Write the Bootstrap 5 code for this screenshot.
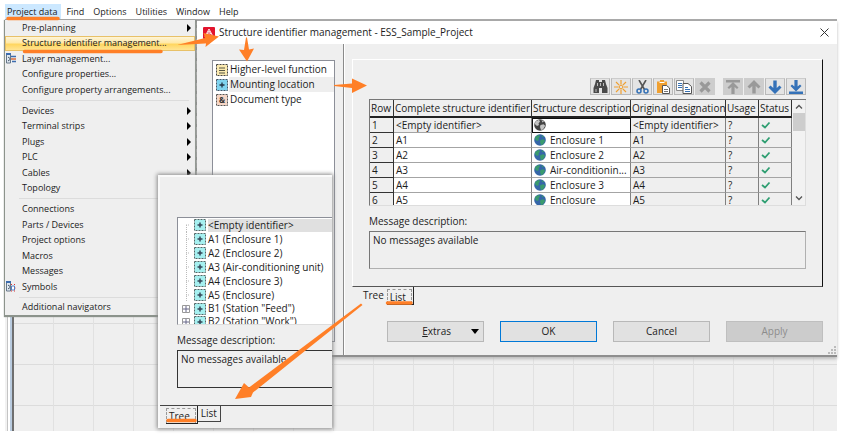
<!DOCTYPE html>
<html lang="en">
<head>
<meta charset="utf-8">
<meta name="viewport" content="width=device-width, initial-scale=1">
<title>Structure identifier management</title>
<link href="https://cdn.jsdelivr.net/npm/bootstrap@5.3.0/dist/css/bootstrap.min.css" rel="stylesheet">
<style>
  :root { --face: #efefef; --ink: #1c1c1c; --accent: #ff7f27; }
  body { font-family: "Open Sans", "Noto Sans", sans-serif; font-size: 10px; line-height: 15px; color: var(--ink); background: #fff; min-height: 435px; }
  button, textarea { font: inherit; color: inherit; border: 0; background: none; padding: 0; border-radius: 0; }
  svg { display: block; flex: none; }

  .menu-strip { height: 19px; padding: 4px 0 0 5px; font-size: 9px; line-height: 14px; background: #fff; }
  .menu-strip button { padding: 0 4px 0 5px; }
  .menu-strip button.is-open { background: #cce8ff; padding: 0 4px 0 2px; }

  .desk { height: 412px; margin: 0 4px 0 5px; border-top: 1px solid #a8a8a8; }
  .rail { width: 9px; background: linear-gradient(90deg, #f2f2f2 0 2px, #c4c4c4 2px 3px, #fff 3px 5px, #b9cbdf 5px 7px, #6f6f6f 7px); }
  .sheet { background: linear-gradient(90deg, transparent 39px, #e1e1e1 39px) 0 0 / 40px 41px, linear-gradient(transparent 40px, #dcdcdc 40px) 0 17px / 40px 41px, var(--face); }

  .drop { position: absolute; left: 5px; top: 20px; width: 190px; height: 295px; background: var(--face); font-size: 9px; line-height: 14px; box-shadow: 0 1px 1px 1px #8c938c; }
  .drop button { flex: 1; padding: 0 4px 0 1px; text-align: left; }
  .drop .slot { width: 16px; flex: none; }
  .drop .is-hot { background: linear-gradient(#fdf6e0, #ffe9a8 45%, #ffd65f 55%, #ffe79c); outline: 1px solid #e8c168; outline-offset: -1px; }
  .drop hr { margin: 2px 6px 2px 14px; border: 0; border-top: 1px solid #dcdcdc; opacity: 1; }
  .edge { position: absolute; left: 194px; top: 20px; width: 3px; height: 296px; background: repeating-linear-gradient(#8a8a8a 0 5px, #6e6e6e 5px 8px, #9a9a9a 8px 11px); }

  .win { position: absolute; left: 197px; right: 4px; top: 20px; height: 337px; background: var(--face); border-top: 1px solid #a8a8a8; border-bottom: 2px solid #8e8e8e; box-shadow: 0 2px 3px #bbb; }
  .win-bar { height: 23px; padding: 0 4px 0 6px; background: #fff; }
  .side { flex: 0 0 147px; padding: 16px 8px 13px 15px; border-right: 1px solid #8a8a8a; box-shadow: 1px 0 #fff; }
  .kinds { border: 1px solid #8c8f98; background: #fff; padding: 1px 0; }
  .kinds button { text-align: left; padding-left: 3px; height: 15px; white-space: nowrap; }
  .kinds span { padding-left: 2px; }
  .kinds .is-picked { background: linear-gradient(90deg, #fff 16px, #eee 16px); }
  .work { padding: 15px 14px 0 8px; min-width: 0; }
  .pane { padding: 18px 16px 17px 16px; border: 1px solid; border-color: #fff #111 #555 #fff; }
  .tools { gap: 1px; }
  .tool { width: 20px; height: 17px; border: 1px solid #b9b9b9; border-top-color: #ccc; background: #e4e4e4; display: flex; align-items: center; justify-content: center; }
  .tool:disabled { background: #cdcdcd; border-color: #cdcdcd; }

  .gridbox { height: 107px; border-top: 1px solid #777; border-left: 1px solid #777; border-bottom: 1px solid #ddd; background: var(--face); overflow: hidden; }
  .sheet-table { table-layout: fixed; width: 100%; border-collapse: separate; border-spacing: 0; color: var(--ink); }
  .sheet-table th, .sheet-table td { padding: 0 2px; height: 15px; line-height: 14px; border-right: 1px solid #808080; border-bottom: 1px solid #a4a4a4; white-space: nowrap; font-weight: 400; }
  .sheet-table thead th { height: 18px; line-height: 16px; padding: 0 0 0 1px; border-right: 1px solid #333; border-bottom: 2px solid #222; }
  .sheet-table tbody th { border-right: 1px solid #333; border-bottom: 1px solid #333; }
  .sheet-table td.open { background: #fff; }
  .sheet-table td.cursor { background: #fff; outline: 1px solid #111; outline-offset: -1px; }
  .scroller { width: 14px; padding-left: 1px; border-right: 1px solid #ddd; background: #f2f2f2; }
  .thumb { height: 18px; background: #cdcdcd; }
  .note-label { padding-bottom: 2px; }
  .note { display: block; width: 100%; height: 38px; resize: none; padding: 1px 3px; line-height: 14px; border: 1px solid; border-color: #777 #b0b0b0 #b0b0b0 #777; overflow: hidden; outline: 0; }
  .page-tab { height: 16px; padding: 0 3px; background: var(--face); }
  .page-tab.is-front { height: 18px; padding: 1px 1px 0 0; border-right: 1px solid #222; border-bottom: 1px solid #222; }
  .page-tab.is-back { border-right: 1px solid #444; border-bottom: 1px solid #444; }
  .dotted-box { display: block; border: 1px dashed #999; border-bottom: 0; padding: 0 5px 0 2px; height: 15px; line-height: 15px; }
  .act { flex: 0 0 97px; height: 21px; border: 1px solid #b8b8b8; background: #e1e1e1; }
  .act.is-default { border: 1px solid #0078d7; outline: 1px solid #0078d7; outline-offset: -1px; }
  .act:disabled { background: #ccc; border-color: #bfbfbf; color: #8c8c8c; }

  .snip { position: absolute; left: 158px; top: 175px; width: 174px; height: 253px; background: var(--face); border: 1px solid #fafafa; border-width: 2px 0 0 2px; box-shadow: 0 0 4px 1px #8a8a8a; padding-top: 40px; }
  .snip-in { margin-left: 17px; }
  .tree { height: 108px; border: 1px solid #8c8f98; border-right: 0; border-bottom-color: #ddd; background: #fff; overflow: hidden; }
  .tree ul { height: 110px; }
  .tree li { flex: 1; line-height: 13px; white-space: nowrap; }
  .tree li > span { padding-left: 2px; }
  .tree .is-picked > span { background: linear-gradient(90deg, #fff 2px, #e0e0e0 2px); flex: 1; }
  .snip .note { height: 38px; border-right: 0; border-color: #333; }
  .snip-foot { margin-top: 17px; border-top: 1px solid #444; padding-left: 6px; }
  .marks { position: absolute; left: 0; top: 0; pointer-events: none; }
</style>
</head>
<body class="position-relative">
<svg width="0" height="0" class="position-absolute" aria-hidden="true">
  <defs>
    <symbol id="loc" viewBox="0 0 12 12"><rect x=".5" y=".5" width="11" height="11" fill="#a5f0f0" stroke="#566" stroke-dasharray="2 1"/><path d="M6 3.500v5M3.500 6h5" stroke="#345" stroke-width="1.500"/></symbol>
    <symbol id="globe" viewBox="0 0 12 12"><circle cx="6" cy="6" r="5.800" fill="#3566a8"/><path d="M1.500 2.500 5 .8l1 1.700-1.500 2L5 6 3 7 .8 5zM6.500 6l3-.8 1.700 1.500L9 10.500 7 11 6 8zM7.500 1l2.500 1.500-1.500 1z" fill="#3a9a6e"/></symbol>
    <symbol id="globe-off" viewBox="0 0 12 12"><circle cx="6" cy="6" r="5.800" fill="#444"/><path d="M1.500 2.500 5 .8l1 1.700-1.500 2L5 6 3 7 .8 5zM6.500 6l3-.8 1.700 1.500L9 10.500 7 11 6 8zM7.500 1l2.500 1.500-1.500 1z" fill="#c4c4c4"/></symbol>
    <symbol id="tick" viewBox="0 0 10 8"><path d="M1 4l3 2.500L8.500 1.500" fill="none" stroke="#2f9f72" stroke-width="1.800"/></symbol>
    <symbol id="fly" viewBox="0 0 4 8"><path d="M0 0l4 4-4 4z"/></symbol>
    <symbol id="plusbox" viewBox="0 0 8 8"><path d="M.5.5h7v7h-7z" fill="#fff" stroke="#999"/><path d="M4 1v6M1 4h6" stroke="#668"/></symbol>
    <symbol id="up" viewBox="0 0 14 14"><path d="M7 0 13.500 6.500 11.500 8.500 8.700 6v7.500H5.300V6L2.500 8.500.5 6.500z"/></symbol>
  </defs>
</svg>

<nav class="menu-strip d-flex" aria-label="Main menu">
  <button type="button" class="is-open">Project data</button>
  <button type="button">Find</button>
  <button type="button">Options</button>
  <button type="button">Utilities</button>
  <button type="button">Window</button>
  <button type="button">Help</button>
</nav>

<main>
  <div class="desk d-flex"><div class="rail"></div><div class="sheet flex-fill"></div></div>

  <div class="edge"></div>
  <div class="drop d-flex flex-column" role="menu" aria-label="Project data">
    <button class="d-flex align-items-center" role="menuitem"><span class="slot"></span>Pre-planning<svg class="ms-auto" width="4" height="8"><use href="#fly"/></svg></button>
    <button class="d-flex align-items-center is-hot" role="menuitem"><span class="slot"></span>Structure identifier management...</button>
    <button class="d-flex align-items-center" role="menuitem"><span class="slot"><svg width="10" height="11" viewBox="0 0 10 11"><path d="M.5 1h4v9h-4z" fill="#dfe8f2" stroke="#678"/><path d="M0 0h5v2H0z" fill="#3d6cae"/><path d="M2 4l2 1.500M2 8l2-1.500" stroke="#456"/><path d="M5 3.500h5M6 8.500h4" stroke="#3d6cae" stroke-width="1.500"/><path d="M5 6h5" stroke="#d96b3c" stroke-width="1.500"/></svg></span>Layer management...</button>
    <button class="d-flex align-items-center" role="menuitem"><span class="slot"></span>Configure properties...</button>
    <button class="d-flex align-items-center" role="menuitem"><span class="slot"></span>Configure property arrangements...</button>
    <hr>
    <button class="d-flex align-items-center" role="menuitem"><span class="slot"></span>Devices<svg class="ms-auto" width="4" height="8"><use href="#fly"/></svg></button>
    <button class="d-flex align-items-center" role="menuitem"><span class="slot"></span>Terminal strips<svg class="ms-auto" width="4" height="8"><use href="#fly"/></svg></button>
    <button class="d-flex align-items-center" role="menuitem"><span class="slot"></span>Plugs<svg class="ms-auto" width="4" height="8"><use href="#fly"/></svg></button>
    <button class="d-flex align-items-center" role="menuitem"><span class="slot"></span>PLC<svg class="ms-auto" width="4" height="8"><use href="#fly"/></svg></button>
    <button class="d-flex align-items-center" role="menuitem"><span class="slot"></span>Cables<svg class="ms-auto" width="4" height="8"><use href="#fly"/></svg></button>
    <button class="d-flex align-items-center" role="menuitem"><span class="slot"></span>Topology</button>
    <hr>
    <button class="d-flex align-items-center" role="menuitem"><span class="slot"></span>Connections</button>
    <button class="d-flex align-items-center" role="menuitem"><span class="slot"></span>Parts / Devices</button>
    <button class="d-flex align-items-center" role="menuitem"><span class="slot"></span>Project options</button>
    <button class="d-flex align-items-center" role="menuitem"><span class="slot"></span>Macros</button>
    <button class="d-flex align-items-center" role="menuitem"><span class="slot"></span>Messages</button>
    <button class="d-flex align-items-center" role="menuitem"><span class="slot"><svg width="10" height="11" viewBox="0 0 10 11"><path d="M.5 1h4v9h-4z" fill="#dfe8f2" stroke="#678"/><path d="M0 0h5v2H0z" fill="#3d6cae"/><path d="M2 4l2 1.500M2 8l2-1.500" stroke="#456"/><path d="M5.500 5h3v4h-3z" fill="#fff" stroke="#567fc0"/><path d="M5 3.500h1M8 3.500h1M5 10h1M8 10h1M9.500 7h.5" stroke="#d33"/></svg></span>Symbols</button>
    <hr>
    <button class="d-flex align-items-center" role="menuitem"><span class="slot"></span>Additional navigators</button>
  </div>

  <section class="win d-flex flex-column" role="dialog" aria-label="Structure identifier management">
    <header class="win-bar d-flex align-items-center">
      <svg width="12" height="12" viewBox="0 0 12 12"><rect width="12" height="12" rx="1" fill="#e2142d"/><path d="M2 9.500 6 2l4 7.500M4 7.500 6 4l2 3.500M6 6v4" fill="none" stroke="#fff" stroke-width=".9"/></svg>
      <span class="ms-1">Structure identifier management - ESS_Sample_Project</span>
      <button type="button" class="ms-auto pe-1" aria-label="Close"><svg width="9" height="9" viewBox="0 0 9 9"><path d="M.5.5l8 8M8.500.5l-8 8" stroke="#333"/></svg></button>
    </header>
    <div class="d-flex flex-fill">
      <aside class="side d-flex flex-column">
        <div class="kinds d-flex flex-column flex-fill">
          <button class="d-flex align-items-center" type="button"><svg width="12" height="12" viewBox="0 0 12 12"><rect x=".5" y=".5" width="11" height="11" fill="#fbeab0" stroke="#444" stroke-dasharray="2 1"/><path d="M3 4h6M3 6.500h6M3 9h6" stroke="#554"/></svg><span>Higher-level function</span></button>
          <button class="d-flex align-items-center is-picked" type="button"><svg width="12" height="12" viewBox="0 0 12 12"><rect x=".5" y=".5" width="11" height="11" fill="#7fd4f0" stroke="#456" stroke-dasharray="2 1"/><path d="M6 3.500v5M3.500 6h5" stroke="#234" stroke-width="1.300"/></svg><span>Mounting location</span></button>
          <button class="d-flex align-items-center" type="button"><svg width="12" height="12" viewBox="0 0 12 12"><rect x=".5" y=".5" width="11" height="11" fill="#f6d6c6" stroke="#555" stroke-dasharray="2 1"/><text x="6" y="9" font-size="8" font-weight="700" text-anchor="middle" fill="#333">&amp;</text></svg><span>Document type</span></button>
        </div>
      </aside>
      <div class="work flex-fill">
        <div class="pane d-flex flex-column">
          <div class="d-flex justify-content-end mb-1" role="toolbar" aria-label="Identifiers">
            <div class="tools d-flex">
              <button class="tool" aria-label="Find"><svg width="15" height="13" viewBox="0 0 15 13"><path d="M3 0h3v2h3V0h3l1 4 1.500 4v5H9V8H6v5H.5V8L2 4z" fill="#4a4a4a"/><path d="M4.500 3v3M10.500 3v3M3 9v3M7.500 3v3" stroke="#bbb"/></svg></button>
              <button class="tool" aria-label="New"><svg width="14" height="14" viewBox="0 0 14 14"><path d="M7 0v4.500M7 9.500V14M0 7h4.500M9.500 7H14M2 2l3.200 3.200M8.800 8.800 12 12M12 2 8.800 5.200M5.200 8.800 2 12" stroke="#f0a030" stroke-width="1.200"/><circle cx="7" cy="7" r="1.800" fill="none" stroke="#f0a030"/></svg></button>
              <button class="tool" aria-label="Cut"><svg width="13" height="14" viewBox="0 0 13 14"><path d="M3 0l5.500 9.500M10 0 4.500 9.500" stroke="#555" stroke-width="1.600"/><circle cx="3" cy="11" r="2" fill="none" stroke="#3470b4" stroke-width="1.500"/><circle cx="10" cy="11" r="2" fill="none" stroke="#3470b4" stroke-width="1.500"/></svg></button>
              <button class="tool" aria-label="Paste"><svg width="13" height="14" viewBox="0 0 13 14"><path d="M0 1.500h3V0h4v1.500h3V13H0z" fill="#f0a030"/><path d="M2.500 2.500h5" stroke="#fff"/><path d="M5.500 5.500h4l3 2.500v5.500h-7z" fill="#fff" stroke="#555"/><path d="M7 9.500h4M7 11.500h4" stroke="#777"/></svg></button>
              <button class="tool" aria-label="Copy"><svg width="16" height="14" viewBox="0 0 16 14"><path d="M.5.5h7v10h-7z" fill="#fff" stroke="#888"/><path d="M2 3.500h4M2 5.500h4M2 7.500h4" stroke="#3470b4"/><path d="M7 3.500h5l3.500 3v7H7z" fill="#fff" stroke="#555"/><path d="M9 7.500h3M9 9.500h5M9 11.500h5" stroke="#3470b4"/></svg></button>
              <button class="tool" aria-label="Delete" disabled><svg width="12" height="12" viewBox="0 0 12 12"><path d="M1.500 1.500l9 9M10.500 1.500l-9 9" stroke="#999" stroke-width="3.200"/></svg></button>
            </div>
            <div class="tools d-flex ms-2">
              <button class="tool" aria-label="Move to top" disabled><svg width="14" height="14" viewBox="0 0 14 14" fill="#999"><path d="M0 0h14v2.500H0z"/><path d="M7 2l5.500 5.500-1.500 1.500L8.600 7v7H5.400V7L3 9 1.500 7.500z"/></svg></button>
              <button class="tool" aria-label="Move up" disabled><svg width="14" height="14" fill="#999"><use href="#up"/></svg></button>
              <button class="tool" aria-label="Move down"><svg width="14" height="14" viewBox="0 0 14 14" fill="#3572b8"><path d="M7 14 13.500 7.500 11.500 5.500 8.700 8V.5H5.300V8L2.500 5.500.5 7.500z"/></svg></button>
              <button class="tool" aria-label="Move to bottom"><svg width="14" height="14" viewBox="0 0 14 14" fill="#3572b8"><path d="M0 11.500h14V14H0z"/><path d="M7 11.500l5.500-5.500L11 4.500 8.600 6.500V0H5.400v6.500L3 4.500 1.500 6z"/></svg></button>
            </div>
          </div>
          <div class="gridbox d-flex">
            <table class="sheet-table">
              <colgroup><col style="width:24px"><col style="width:138px"><col><col style="width:95px"><col style="width:33px"><col style="width:33px"></colgroup>
              <thead><tr><th scope="col">Row</th><th scope="col">Complete structure identifier</th><th scope="col">Structure description</th><th scope="col">Original designation</th><th scope="col">Usage</th><th scope="col">Status</th></tr></thead>
              <tbody>
                <tr><th scope="row">1</th><td>&lt;Empty identifier&gt;</td><td class="cursor"><svg width="12" height="12"><use href="#globe-off"/></svg></td><td>&lt;Empty identifier&gt;</td><td>?</td><td><svg width="10" height="8"><use href="#tick"/></svg></td></tr>
                <tr><th scope="row">2</th><td class="open">A1</td><td class="open"><div class="d-flex align-items-center"><svg width="12" height="12"><use href="#globe"/></svg><span class="ms-1">Enclosure 1</span></div></td><td>A1</td><td>?</td><td><svg width="10" height="8"><use href="#tick"/></svg></td></tr>
                <tr><th scope="row">3</th><td class="open">A2</td><td class="open"><div class="d-flex align-items-center"><svg width="12" height="12"><use href="#globe"/></svg><span class="ms-1">Enclosure 2</span></div></td><td>A2</td><td>?</td><td><svg width="10" height="8"><use href="#tick"/></svg></td></tr>
                <tr><th scope="row">4</th><td class="open">A3</td><td class="open"><div class="d-flex align-items-center"><svg width="12" height="12"><use href="#globe"/></svg><span class="ms-1">Air-conditionin...</span></div></td><td>A3</td><td>?</td><td><svg width="10" height="8"><use href="#tick"/></svg></td></tr>
                <tr><th scope="row">5</th><td class="open">A4</td><td class="open"><div class="d-flex align-items-center"><svg width="12" height="12"><use href="#globe"/></svg><span class="ms-1">Enclosure 3</span></div></td><td>A4</td><td>?</td><td><svg width="10" height="8"><use href="#tick"/></svg></td></tr>
                <tr><th scope="row">6</th><td class="open">A5</td><td class="open"><div class="d-flex align-items-center"><svg width="12" height="12"><use href="#globe"/></svg><span class="ms-1">Enclosure</span></div></td><td>A5</td><td>?</td><td><svg width="10" height="8"><use href="#tick"/></svg></td></tr>
              </tbody>
            </table>
            <div class="scroller d-flex flex-column flex-shrink-0">
              <svg width="12" height="13" viewBox="0 0 12 13"><path d="M3 8.500l3-3 3 3" fill="none" stroke="#555" stroke-width="1.300"/></svg>
              <div class="thumb"></div>
              <svg class="mt-auto" width="12" height="13" viewBox="0 0 12 13"><path d="M3 4.500l3 3 3-3" fill="none" stroke="#555" stroke-width="1.300"/></svg>
            </div>
          </div>
          <label for="list-note" class="note-label mt-2">Message description:</label>
          <textarea id="list-note" class="note" readonly>No messages available</textarea>
        </div>
        <div class="d-flex align-items-start ps-2" role="tablist">
          <button class="page-tab" role="tab">Tree</button>
          <button class="page-tab is-front" role="tab"><span class="dotted-box">List</span></button>
        </div>
        <div class="d-flex justify-content-end gap-3 mt-3">
          <button type="button" class="act d-flex align-items-center justify-content-end pe-1"><span class="me-3 pe-1"><u>E</u>xtras</span><svg width="8" height="5" viewBox="0 0 8 5"><path d="M0 0h8L4 5z"/></svg></button>
          <button type="button" class="act is-default">OK</button>
          <button type="button" class="act">Cancel</button>
          <button type="button" class="act" disabled>Apply</button>
        </div>
      </div>
    </div>
    <svg class="position-absolute end-0 bottom-0" width="9" height="9" viewBox="0 0 9 9" fill="#bbb"><path d="M6 0h2v2H6zM3 3h2v2H3zM6 3h2v2H6zM0 6h2v2H0zM3 6h2v2H3zM6 6h2v2H6z"/></svg>
  </section>

  <section class="snip" aria-label="Tree page">
    <div class="snip-in d-flex flex-column">
      <div class="tree">
        <ul class="list-unstyled d-flex flex-column m-0">
          <li class="d-flex align-items-center ps-2 is-picked"><svg width="4" height="14"><path d="M0 7h4M.5 7v7" stroke="#bbb" stroke-dasharray="1 1"/></svg><svg width="12" height="12" class="ms-1"><use href="#loc"/></svg><span>&lt;Empty identifier&gt;</span></li>
          <li class="d-flex align-items-center ps-2"><svg width="4" height="14"><path d="M0 7h4M.5 0v14" stroke="#bbb" stroke-dasharray="1 1"/></svg><svg width="12" height="12" class="ms-1"><use href="#loc"/></svg><span>A1 (Enclosure 1)</span></li>
          <li class="d-flex align-items-center ps-2"><svg width="4" height="14"><path d="M0 7h4M.5 0v14" stroke="#bbb" stroke-dasharray="1 1"/></svg><svg width="12" height="12" class="ms-1"><use href="#loc"/></svg><span>A2 (Enclosure 2)</span></li>
          <li class="d-flex align-items-center ps-2"><svg width="4" height="14"><path d="M0 7h4M.5 0v14" stroke="#bbb" stroke-dasharray="1 1"/></svg><svg width="12" height="12" class="ms-1"><use href="#loc"/></svg><span>A3 (Air-conditioning unit)</span></li>
          <li class="d-flex align-items-center ps-2"><svg width="4" height="14"><path d="M0 7h4M.5 0v14" stroke="#bbb" stroke-dasharray="1 1"/></svg><svg width="12" height="12" class="ms-1"><use href="#loc"/></svg><span>A4 (Enclosure 3)</span></li>
          <li class="d-flex align-items-center ps-2"><svg width="4" height="14"><path d="M0 7h4M.5 0v14" stroke="#bbb" stroke-dasharray="1 1"/></svg><svg width="12" height="12" class="ms-1"><use href="#loc"/></svg><span>A5 (Enclosure)</span></li>
          <li class="d-flex align-items-center ps-1"><svg width="8" height="8"><use href="#plusbox"/></svg><svg width="12" height="12" class="ms-1"><use href="#loc"/></svg><span>B1 (Station "Feed")</span></li>
          <li class="d-flex align-items-center ps-1"><svg width="8" height="8"><use href="#plusbox"/></svg><svg width="12" height="12" class="ms-1"><use href="#loc"/></svg><span>B2 (Station "Work")</span></li>
        </ul>
      </div>
      <label for="tree-note" class="note-label mt-2">Message description:</label>
      <textarea id="tree-note" class="note" readonly>No messages available</textarea>
    </div>
    <div class="snip-foot d-flex align-items-start" role="tablist">
      <button class="page-tab is-front" role="tab"><span class="dotted-box">Tree</span></button>
      <button class="page-tab is-back" role="tab">List</button>
    </div>
  </section>

  <svg class="marks" width="841" height="435" fill="#ff7f27" aria-hidden="true">
    <path d="M177 45 205 38 203.500 33 219 36.500 205.500 47 206 43.500z"/>
    <path d="M246 37.500h1l2 12 5-1L247 61.500 239 49.500l5 .5z"/>
    <path d="M334 85l18-1.500V78.500L367 85.500 352 93V88l-18-2z"/>
    <path d="M361 303.500l1.500 1.500L253 392.500l-2 4.500-16 2 9-16 5 4.500z"/>
    <path d="M8 18.500h50M24.500 51.500H161M387.500 303H411M168 420.500h27" stroke="#ff7f27" stroke-width="3.500" stroke-linecap="round"/>
  </svg>
</main>
<script src="https://cdn.jsdelivr.net/npm/bootstrap@5.3.0/dist/js/bootstrap.bundle.min.js"></script>
</body>
</html>
